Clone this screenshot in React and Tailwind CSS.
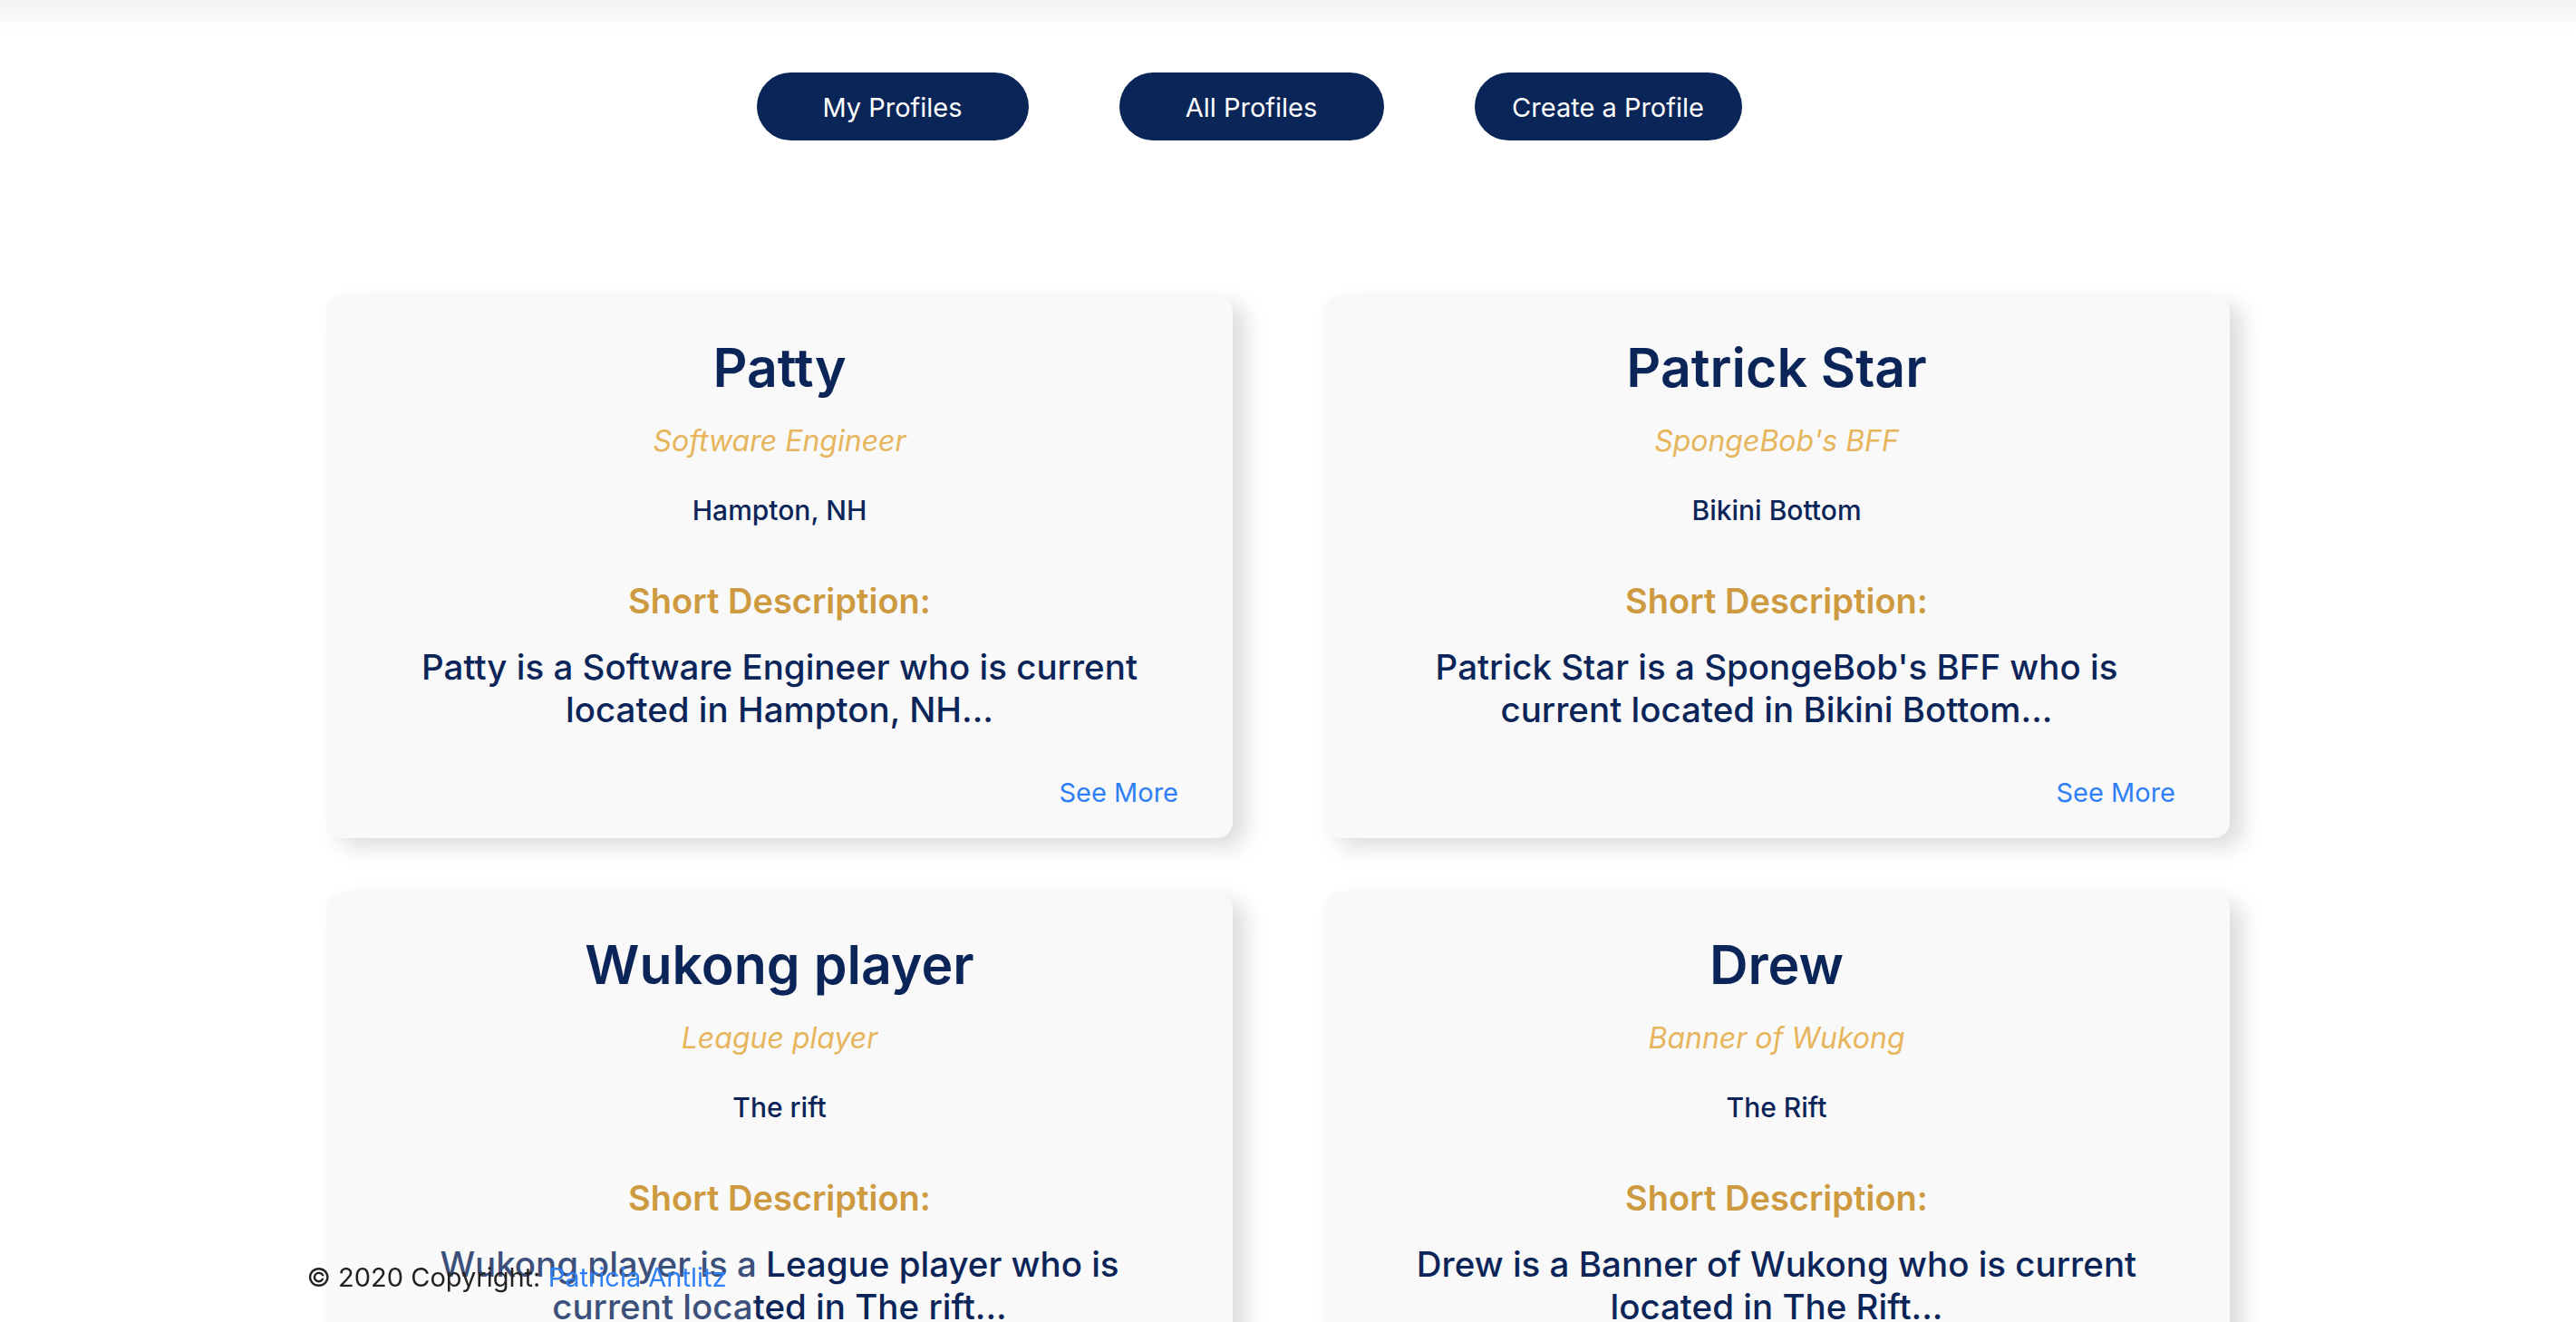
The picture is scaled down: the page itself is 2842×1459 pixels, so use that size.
import React from "react";

const profiles = [
  {
    name: "Patty",
    title: "Software Engineer",
    location: "Hampton, NH",
    desc: "Patty is a Software Engineer who is current located in Hampton, NH...",
  },
  {
    name: "Patrick Star",
    title: "SpongeBob's BFF",
    location: "Bikini Bottom",
    desc: "Patrick Star is a SpongeBob's BFF who is current located in Bikini Bottom...",
  },
  {
    name: "Wukong player",
    title: "League player",
    location: "The rift",
    desc: "Wukong player is a League player who is current located in The rift...",
  },
  {
    name: "Drew",
    title: "Banner of Wukong",
    location: "The Rift",
    desc: "Drew is a Banner of Wukong who is current located in The Rift...",
  },
];

function Card({ p }) {
  return (
    <div className="bg-[#f9f9f9] rounded-[18px] shadow-[14px_10px_24px_rgba(0,0,0,0.14)] pt-[50px] pb-[30px] px-[60px] flex flex-col items-center text-center">
      <h2 className="text-[59px] leading-[60px] font-semibold text-[#0b2559]">{p.name}</h2>
      <p className="mt-[31px] text-[32px] leading-[40px] italic text-[#e6b55c]">{p.title}</p>
      <p className="mt-[36px] text-[30px] leading-[40px] font-medium text-[#0b2559]">{p.location}</p>
      <h3 className="mt-[58px] text-[38px] leading-[44px] font-semibold text-[#cd9a40]">Short Description:</h3>
      <p className="mt-[28px] max-w-[830px] text-[38.5px] leading-[47px] font-medium text-[#0b2559]">{p.desc}</p>
      <a href="#" className="self-end mt-[48px] text-[29px] leading-[40px] text-[#2f7ff5]">See More</a>
    </div>
  );
}

export default function App() {
  return (
    <div className="min-h-screen bg-white font-['Inter','Noto_Sans',sans-serif]">
      <div className="h-[35px] bg-gradient-to-b from-[#f3f3f3] to-white" />
      <nav className="mt-[45px] flex justify-center pr-[86px] gap-x-[100px]">
        <button className="w-[300px] h-[75px] pt-[2px] rounded-full bg-[#0a2558] text-white text-[29px]">My Profiles</button>
        <button className="w-[292px] h-[75px] pt-[2px] rounded-full bg-[#0a2558] text-white text-[29px]">All Profiles</button>
        <button className="w-[295px] h-[75px] pt-[2px] rounded-full bg-[#0a2558] text-white text-[29px]">Create a Profile</button>
      </nav>
      <main className="mt-[171px] flex justify-center pr-[22px] pb-[100px]">
        <div className="grid grid-cols-[1000px_1000px] gap-x-[100px] gap-y-[60px]">
          {profiles.map((p) => (
            <Card key={p.name} p={p} />
          ))}
        </div>
      </main>
      <footer className="fixed bottom-0 left-[307px] w-[526px] h-[104px] pt-[6px] bg-white/20 flex items-center justify-center text-[29px] text-[#222222]">
        <span>
          © 2020 Copyright: <a href="#" className="text-[#2f7ff5]">Patricia Antlitz</a>
        </span>
      </footer>
    </div>
  );
}
